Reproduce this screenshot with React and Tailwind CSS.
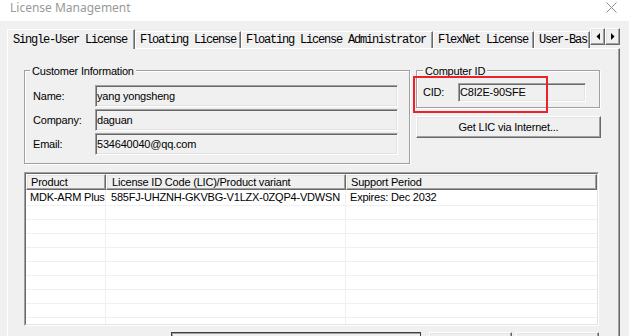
const sunken =
  "border border-t-[#a0a0a0] border-l-[#a0a0a0] border-b-white border-r-white shadow-[inset_1px_1px_0_#696969,inset_-1px_-1px_0_#e3e3e3]";
const raised =
  "border border-t-white border-l-white border-b-[#696969] border-r-[#696969] shadow-[inset_-1px_-1px_0_#a0a0a0,inset_1px_1px_0_#e3e3e3]";
const groupBox =
  "border border-[#a0a0a0] shadow-[inset_1px_1px_0_#fff,1px_1px_0_#fff]";

const tabs = [
  { label: "Floating License", w: "w-[106px]" },
  { label: "Floating License Administrator", w: "w-[192px]" },
  { label: "FlexNet License", w: "w-[101px]" },
  { label: "User-Bas", w: "w-[56px]" },
];

const customer = [
  { label: "Name:", value: "yang yongsheng" },
  { label: "Company:", value: "daguan" },
  { label: "Email:", value: "534640040@qq.com" },
];

function Arrow({ dir }) {
  return (
    <div className={`w-[15px] h-[17px] self-start flex items-center justify-center bg-[#f0f0f0] ${raised}`}>
      <svg width="4" height="7" viewBox="0 0 4 7">
        {dir === "left" ? <polygon points="4,0 4,7 0.5,3.5" fill="#000" /> : <polygon points="0,0 0,7 3.5,3.5" fill="#000" />}
      </svg>
    </div>
  );
}

function LicenseTable() {
  const rows = Array.from({ length: 10 });
  return (
    <div className="mt-[8px] w-[575px] h-[154px] border border-t-[#a0a0a0] border-l-[#a0a0a0] border-b-white border-r-white">
      <div className="h-full bg-white overflow-hidden border border-t-[#696969] border-l-[#696969] border-b-[#e3e3e3] border-r-[#e3e3e3]">
        <div className="flex h-[16px]">
          <div className={`w-[80px] pl-[4px] flex items-center bg-[#f0f0f0] ${raised}`}>Product</div>
          <div className={`w-[240px] pl-[5px] flex items-center bg-[#f0f0f0] ${raised}`}>License ID Code (LIC)/Product variant</div>
          <div className={`flex-1 pl-[4px] flex items-center bg-[#f0f0f0] ${raised}`}>Support Period</div>
        </div>
        {rows.map((_, i) => (
          <div key={i} className={`flex border-b border-[#f0f0f0] ${i === 0 ? "h-[16px]" : "h-[14px]"}`}>
            <div className="w-[80px] pl-[4px] flex items-center border-r border-[#f0f0f0] whitespace-nowrap">{i === 0 && "MDK-ARM Plus"}</div>
            <div className="w-[240px] pl-[5px] flex items-center border-r border-[#f0f0f0] whitespace-nowrap">
              {i === 0 && "585FJ-UHZNH-GKVBG-V1LZX-0ZQP4-VDWSN"}
            </div>
            <div className="flex-1 pl-[4px] flex items-center">{i === 0 && "Expires: Dec 2032"}</div>
          </div>
        ))}
      </div>
    </div>
  );
}

export default function App() {
  return (
    <div className="w-[629px] h-[336px] overflow-hidden bg-[#f0f0f0] font-['Liberation_Sans',Arial,sans-serif] text-[11px] tracking-[-0.2px] text-black leading-none">
      {/* title bar */}
      <div className="h-[21px] bg-white flex items-start justify-between pt-[1px] pl-[10px] pr-[12px]">
        <span className="font-['Noto_Sans',sans-serif] text-[12px] leading-[14px] tracking-normal text-[#999]">License Management</span>
        <svg width="11" height="11" viewBox="0 0 11 11" className="mt-[1px]">
          <path d="M0.5 0.5L10.5 10.5M10.5 0.5L0.5 10.5" stroke="#8c8c8c" strokeWidth="1" />
        </svg>
      </div>

      {/* tab strip */}
      <div className="mt-[7px] ml-[7px] w-[613px] h-[20px] flex items-end font-['Liberation_Mono',monospace] text-[12px] tracking-[-1.2px]">
        <div className="relative z-10 -mb-px h-[20px] w-[128px] pl-[5px] flex items-center bg-[#f0f0f0] border-t border-l border-r border-t-white border-l-white border-r-[#696969] shadow-[inset_-1px_0_0_#a0a0a0]">
          Single-User License
        </div>
        {tabs.map((t) => (
          <div
            key={t.label}
            className={`${t.w} h-[17px] pl-[4px] flex items-center overflow-hidden whitespace-nowrap bg-[#f0f0f0] border-t border-l border-r border-t-white border-l-white border-r-[#696969] shadow-[inset_-1px_0_0_#a0a0a0]`}
          >
            {t.label}
          </div>
        ))}
        <Arrow dir="left" />
        <Arrow dir="right" />
      </div>

      {/* tab page */}
      <div className="ml-[7px] w-[613px] h-[300px] border-t border-l border-r border-t-white border-l-white border-r-[#696969] shadow-[inset_-1px_0_0_#a0a0a0] pl-[16px] pt-[15px]">
        <div className="flex items-start">
          <fieldset className={`w-[386px] pl-[8px] pr-[11px] pt-[8px] pb-[8px] ${groupBox}`}>
            <legend className="-ml-[3px] px-[2px] leading-[13px] bg-[#f0f0f0]">
              <span className="relative top-[1px]">Customer Information</span>
            </legend>
            <div className="flex flex-col gap-[2px]">
              {customer.map((c) => (
                <div key={c.label} className="flex items-center h-[22px]">
                  <div className="w-[62px]">{c.label}</div>
                  <div className={`w-[303px] h-[22px] pl-[1px] flex items-center bg-[#f0f0f0] ${sunken}`}>{c.value}</div>
                </div>
              ))}
            </div>
          </fieldset>

          <div className="relative ml-[6px] w-[185px]">
            <fieldset className={`w-[184px] pl-[6px] pt-[6px] pb-[5px] ${groupBox}`}>
              <legend className="px-[2px] leading-[13px] bg-[#f0f0f0]">
                <span className="relative top-[1px]">Computer ID</span>
              </legend>
              <div className="flex items-center h-[19px]">
                <div className="w-[35px]">CID:</div>
                <div className={`w-[128px] h-[19px] pl-[1px] flex items-center bg-[#f0f0f0] ${sunken}`}>C8I2E-90SFE</div>
              </div>
            </fieldset>
            <button className={`mt-[8px] w-[185px] h-[22px] flex items-center justify-center bg-[#f0f0f0] ${raised}`}>
              Get LIC via Internet...
            </button>
            <div className="absolute left-[-3px] top-[12px] w-[135px] h-[37px] border-2 border-[#e8242a]" />
          </div>
        </div>

        <LicenseTable />

        <div className="mt-[6px] flex">
          <div className="ml-[147px] w-[250px] h-[22px] border border-[#404040] shadow-[inset_1px_1px_0_#a0a0a0]" />
          <div className={`ml-[8px] w-[83px] h-[22px] bg-[#f0f0f0] ${raised}`} />
          <div className={`ml-[4px] w-[83px] h-[22px] bg-[#f0f0f0] ${raised}`} />
        </div>
      </div>
    </div>
  );
}
